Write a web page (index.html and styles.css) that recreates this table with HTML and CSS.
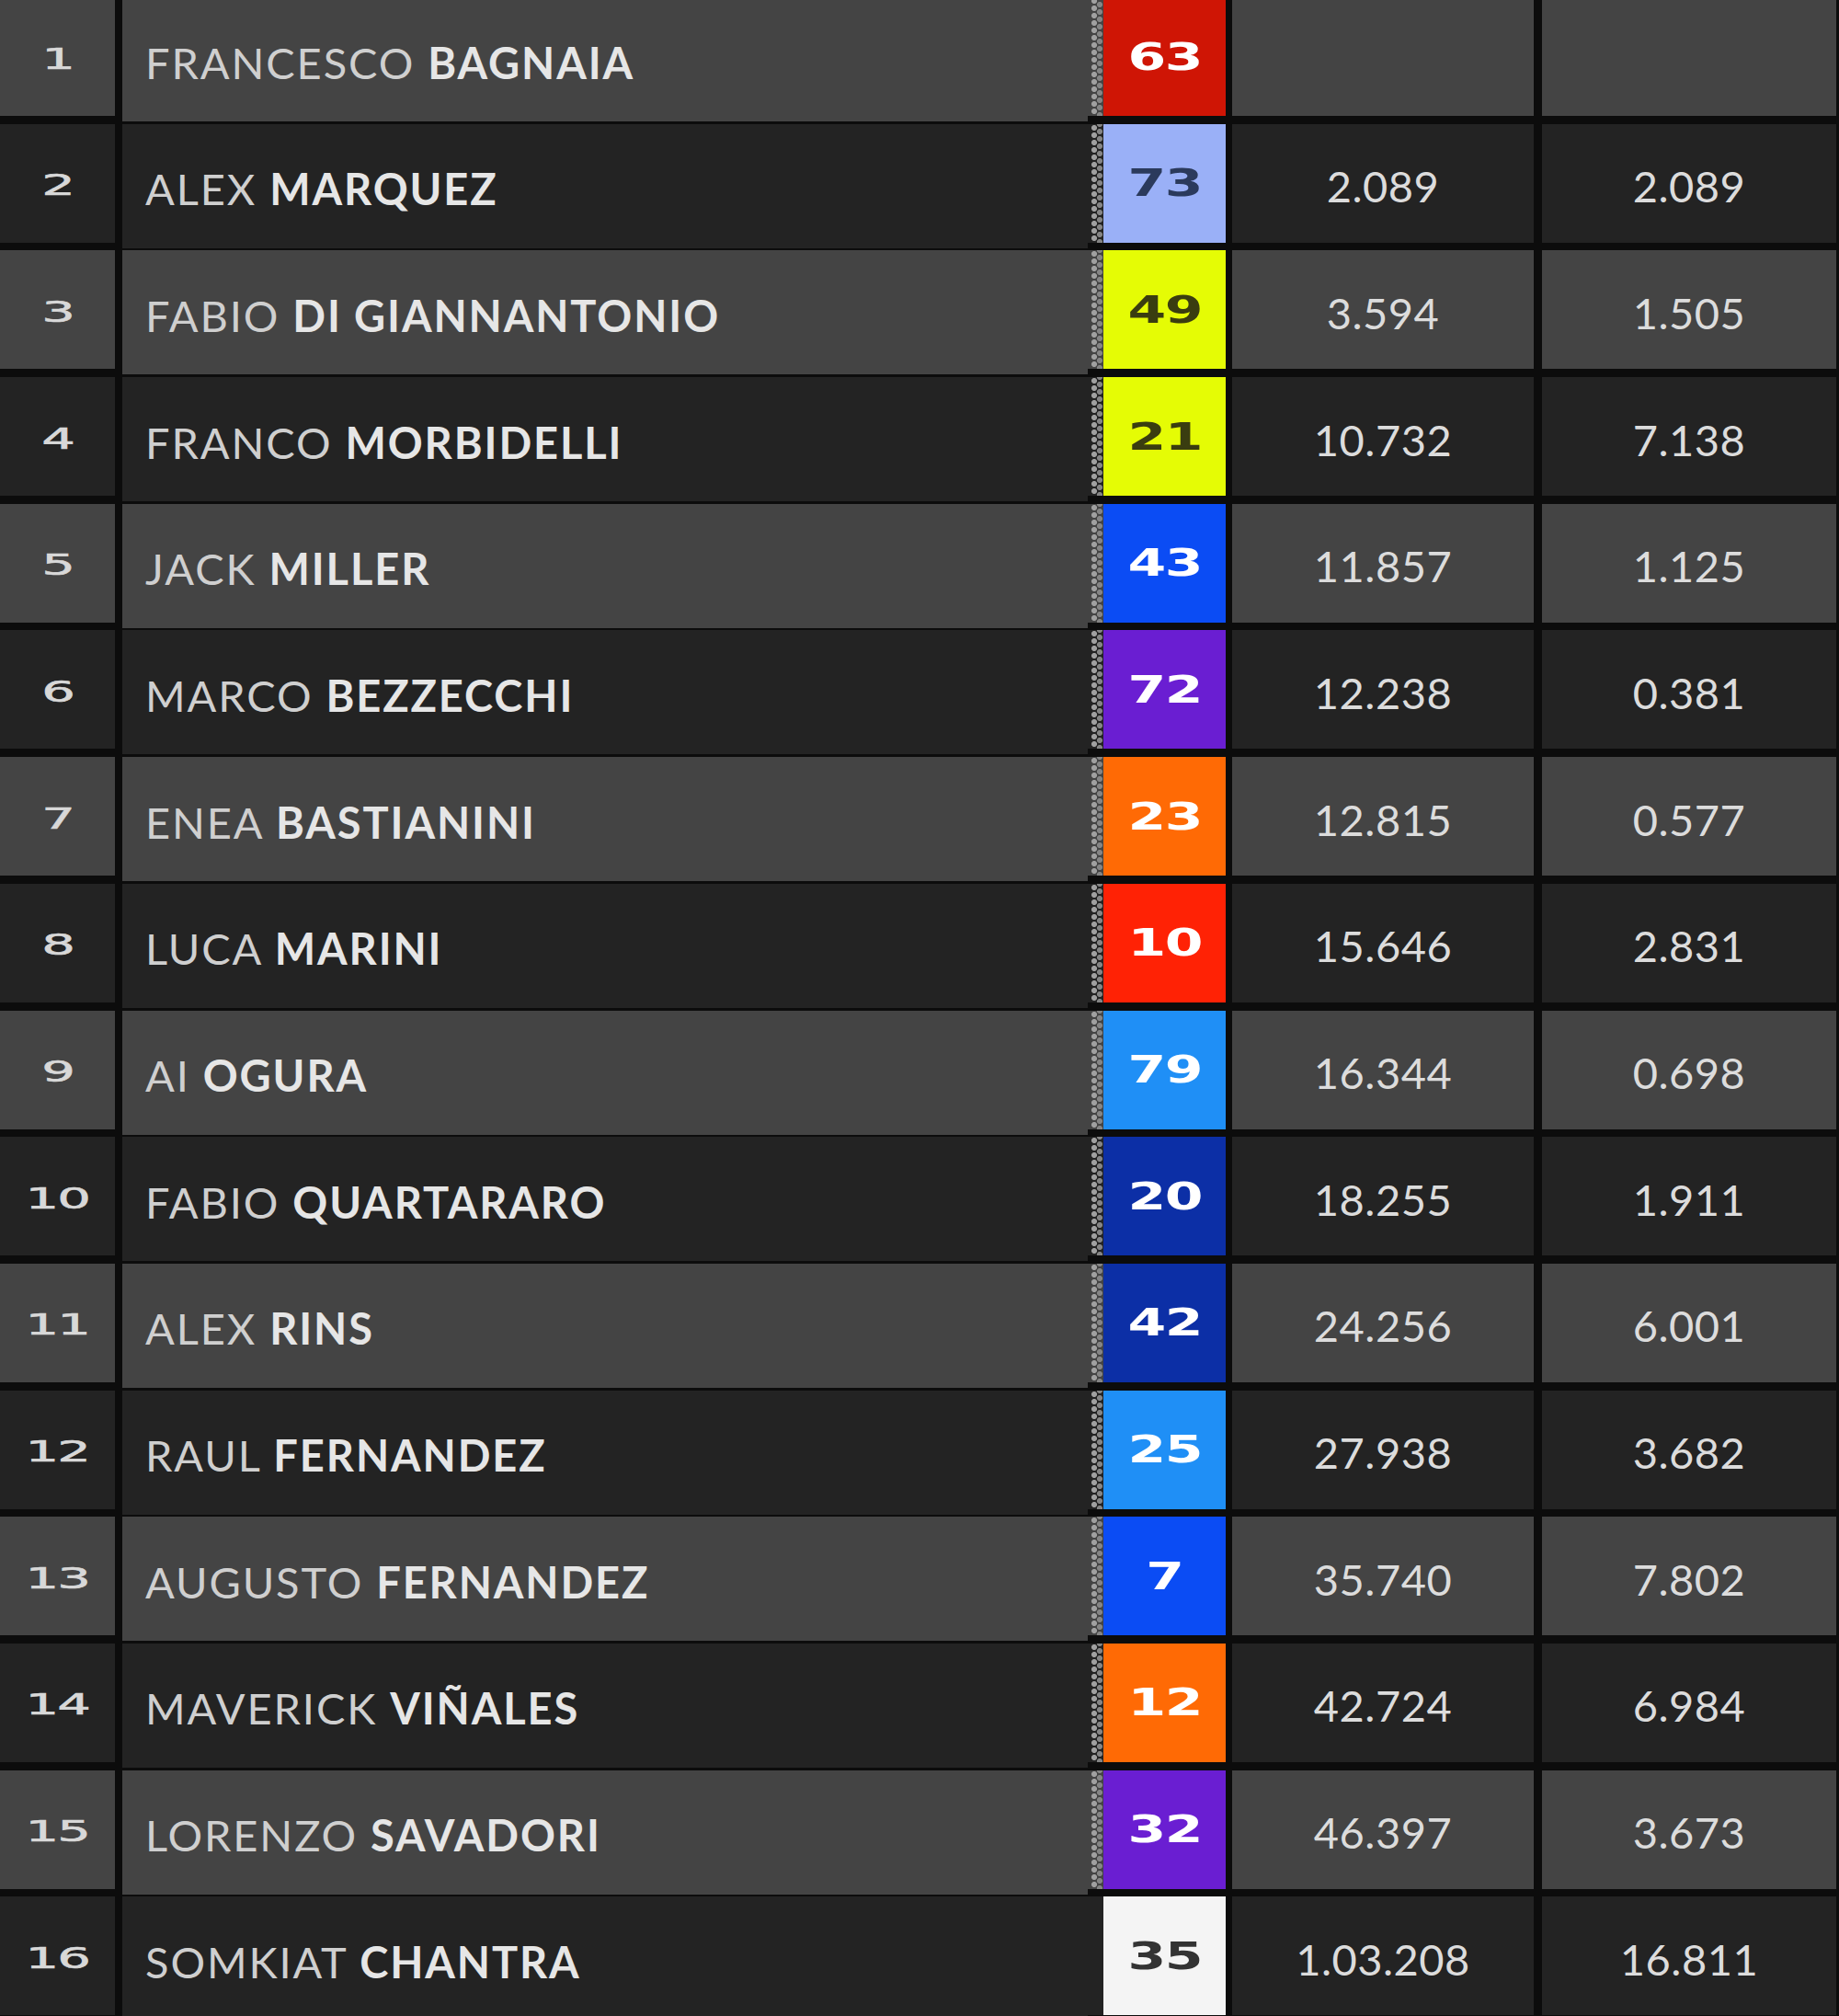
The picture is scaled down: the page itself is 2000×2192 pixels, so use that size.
FILE: index.html
```html
<!DOCTYPE html>
<html>
<head>
<meta charset="utf-8">
<link rel="stylesheet" href="styles.css">
</head>
<body>
<div class="table">
  <div class="row odd"><div class="pos"><span>1</span></div><div class="name">FRANCESCO <b>BAGNAIA</b></div><div class="strip"></div><div class="num red"><span>63</span></div><div class="gap"></div><div class="int"></div></div>
  <div class="row even"><div class="pos"><span>2</span></div><div class="name">ALEX <b>MARQUEZ</b></div><div class="strip"></div><div class="num lblue"><span>73</span></div><div class="gap">2.089</div><div class="int">2.089</div></div>
  <div class="row odd"><div class="pos"><span>3</span></div><div class="name">FABIO <b>DI GIANNANTONIO</b></div><div class="strip"></div><div class="num yellow"><span>49</span></div><div class="gap">3.594</div><div class="int">1.505</div></div>
  <div class="row even"><div class="pos"><span>4</span></div><div class="name">FRANCO <b>MORBIDELLI</b></div><div class="strip"></div><div class="num yellow"><span>21</span></div><div class="gap">10.732</div><div class="int">7.138</div></div>
  <div class="row odd"><div class="pos"><span>5</span></div><div class="name">JACK <b>MILLER</b></div><div class="strip"></div><div class="num blue"><span>43</span></div><div class="gap">11.857</div><div class="int">1.125</div></div>
  <div class="row even"><div class="pos"><span>6</span></div><div class="name">MARCO <b>BEZZECCHI</b></div><div class="strip"></div><div class="num purple"><span>72</span></div><div class="gap">12.238</div><div class="int">0.381</div></div>
  <div class="row odd"><div class="pos"><span>7</span></div><div class="name">ENEA <b>BASTIANINI</b></div><div class="strip"></div><div class="num orange"><span>23</span></div><div class="gap">12.815</div><div class="int">0.577</div></div>
  <div class="row even"><div class="pos"><span>8</span></div><div class="name">LUCA <b>MARINI</b></div><div class="strip"></div><div class="num bred"><span>10</span></div><div class="gap">15.646</div><div class="int">2.831</div></div>
  <div class="row odd"><div class="pos"><span>9</span></div><div class="name">AI <b>OGURA</b></div><div class="strip"></div><div class="num sky"><span>79</span></div><div class="gap">16.344</div><div class="int">0.698</div></div>
  <div class="row even"><div class="pos"><span>10</span></div><div class="name">FABIO <b>QUARTARARO</b></div><div class="strip"></div><div class="num navy"><span>20</span></div><div class="gap">18.255</div><div class="int">1.911</div></div>
  <div class="row odd"><div class="pos"><span>11</span></div><div class="name">ALEX <b>RINS</b></div><div class="strip"></div><div class="num navy"><span>42</span></div><div class="gap">24.256</div><div class="int">6.001</div></div>
  <div class="row even"><div class="pos"><span>12</span></div><div class="name">RAUL <b>FERNANDEZ</b></div><div class="strip"></div><div class="num sky"><span>25</span></div><div class="gap">27.938</div><div class="int">3.682</div></div>
  <div class="row odd"><div class="pos"><span>13</span></div><div class="name">AUGUSTO <b>FERNANDEZ</b></div><div class="strip"></div><div class="num blue"><span>7</span></div><div class="gap">35.740</div><div class="int">7.802</div></div>
  <div class="row even"><div class="pos"><span>14</span></div><div class="name">MAVERICK <b>VIÑALES</b></div><div class="strip"></div><div class="num orange"><span>12</span></div><div class="gap">42.724</div><div class="int">6.984</div></div>
  <div class="row odd"><div class="pos"><span>15</span></div><div class="name">LORENZO <b>SAVADORI</b></div><div class="strip"></div><div class="num purple"><span>32</span></div><div class="gap">46.397</div><div class="int">3.673</div></div>
  <div class="row even"><div class="pos"><span>16</span></div><div class="name">SOMKIAT <b>CHANTRA</b></div><div class="strip plain"></div><div class="num white"><span>35</span></div><div class="gap">1.03.208</div><div class="int">16.811</div></div>
</div>
</body>
</html>
```
FILE: styles.css
```css
html, body {
  margin: 0;
  padding: 0;
  background: #0c0c0c;
}
body {
  width: 2000px;
  height: 2192px;
  overflow: hidden;
  font-family: Lato, "Noto Sans", sans-serif;
  color: #dcdcdc;
}
.table {
  display: flex;
  flex-direction: column;
  gap: 8.7px;
  margin-top: -3px;
}
.row {
  display: flex;
  height: 129px;
}
.odd { --bg: #444444; }
.even { --bg: #232323; }
.row > div {
  display: flex;
  align-items: center;
  height: 100%;
  background: var(--bg);
}
.pos {
  width: 125px;
  justify-content: center;
}
.pos span {
  display: inline-block;
  font-family: "DejaVu Sans", sans-serif;
  font-size: 32px;
  color: #d8d8d8;
  transform: scaleX(1.8);
  letter-spacing: -1px;
  padding-top: 4px;
  -webkit-text-stroke: 0.6px #d8d8d8;
}
.name {
  width: 1025px;
  margin-left: 8px;
  padding-left: 25px;
  font-size: 47px;
  font-weight: 400;
  letter-spacing: 1.9px;
  color: #cfcfcf;
  white-space: pre;
  padding-top: 6px;
  box-sizing: content-box;
}
.name b {
  font-weight: 700;
  color: #e6e6e6;
}
.row > .strip {
  width: 17px;
  background:
    radial-gradient(circle at 4px 4px, #a0a0a0 2.6px, transparent 3.5px) 3px 0 / 8px 8px repeat-y,
    radial-gradient(circle at 4px 4px, #858585 2.6px, transparent 3.5px) 9px 4px / 8px 8px repeat-y,
    var(--bg);
}
.row > .strip.plain {
  background: var(--bg);
}
.num {
  width: 133px;
  justify-content: center;
}
.num span {
  display: inline-block;
  font-family: "DejaVu Sans", sans-serif;
  font-weight: 700;
  font-size: 40px;
  transform: scaleX(1.5);
  letter-spacing: -1px;
  color: #ffffff;
}
.gap {
  width: 328px;
  margin-left: 7px;
  justify-content: center;
  font-size: 47px;
  letter-spacing: 0.5px;
  padding-top: 6px;
  box-sizing: border-box;
}
.int {
  width: 320px;
  margin-left: 9px;
  justify-content: center;
  font-size: 47px;
  letter-spacing: 0.5px;
  padding-top: 6px;
  box-sizing: border-box;
}
.row > .red { background: #cf1505; }
.row > .lblue { background: #9ab0f7; }
.lblue span { color: #2b3a5c; }
.row > .yellow { background: #e5fc05; }
.yellow span { color: #3a3d10; }
.row > .blue { background: #0b4cf4; }
.row > .purple { background: #6a1ed2; }
.row > .orange { background: #ff6a05; }
.row > .bred { background: #ff2205; }
.row > .sky { background: #1f8ff6; }
.row > .navy { background: #0c2fa6; }
.row > .white { background: #f4f4f4; }
.white span { color: #333333; }
```
